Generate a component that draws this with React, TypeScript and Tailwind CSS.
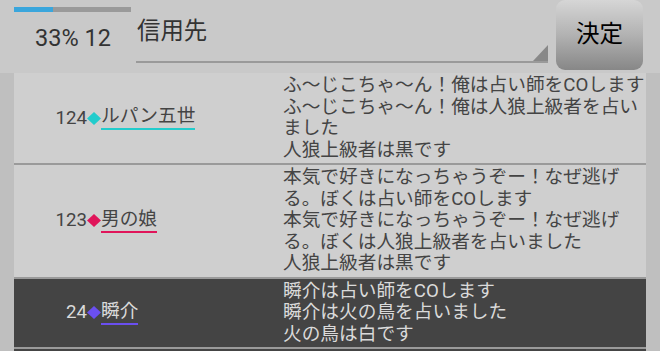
const FONT = 'font-["Roboto","Noto_Sans_CJK_JP",sans-serif]'

type Row = {
  no: number
  name: string
  color: string
  lines: string[]
  dark?: boolean
}

const ROWS: Row[] = [
  {
    no: 124,
    name: 'ルパン五世',
    color: '#22cccc',
    lines: ['ふ〜じこちゃ〜ん！俺は占い師をCOします', 'ふ〜じこちゃ〜ん！俺は人狼上級者を占いました', '人狼上級者は黒です'],
  },
  {
    no: 123,
    name: '男の娘',
    color: '#e0155a',
    lines: [
      '本気で好きになっちゃうぞー！なぜ逃げる。ぼくは占い師をCOします',
      '本気で好きになっちゃうぞー！なぜ逃げる。ぼくは人狼上級者を占いました',
      '人狼上級者は黒です',
    ],
  },
  {
    no: 24,
    name: '瞬介',
    color: '#6a4ff0',
    lines: ['瞬介は占い師をCOします', '瞬介は火の鳥を占いました', '火の鳥は白です'],
    dark: true,
  },
]

function Diamond({ color }: { color: string }) {
  return (
    <svg width="14" height="13" viewBox="0 0 14 13" className="shrink-0">
      <polygon points="7,0 14,6.5 7,13 0,6.5" fill={color} />
    </svg>
  )
}

export default function App() {
  return (
    <div className={`${FONT} w-[660px] h-[351px] overflow-hidden bg-[#c9c9c9]`}>
      {/* header */}
      <div className="flex h-[73px]">
        <div className="w-[136px] flex flex-col">
          <div className="ml-[14px] mt-[7px] w-[117px] h-[5px] bg-[#9a9a9a]">
            <div className="h-full w-[39px] bg-[#3aa6dc]" />
          </div>
          <div className="ml-[35px] mt-[12px] text-[23.5px] leading-[28px] text-[#333]">33% 12</div>
        </div>
        <div className="relative w-[412px] h-[63px] border-b-2 border-[#9a9a9a]">
          <div className="pl-[1px] mt-[17px] text-[23.4px] leading-[28px] text-[#333]">信用先</div>
          <svg width="15" height="16" viewBox="0 0 15 16" className="absolute right-0 bottom-0">
            <polygon points="15,0 15,16 0,16" fill="#888" />
          </svg>
        </div>
        <div className="ml-[8px] w-[87px] h-[70px] rounded-[9px] bg-gradient-to-b from-[#d6d6d6] via-[#b2b2b2] to-[#878787] flex items-center justify-center text-[23.5px] text-black">
          決定
        </div>
      </div>

      {/* list */}
      <div className="bg-[#bfbfbf] px-[14px]">
        {ROWS.map((r) => (
          <div
            key={r.no}
            className={`flex border-b-2 border-[#9a9a9a] ${r.dark ? 'bg-[#444444] text-[#dadada]' : 'bg-[#cfcfcf] text-[#444]'}`}
          >
            <div className="w-[268px] flex items-center text-[18.7px] leading-[21px]">
              <span className="w-[73px] text-right">{r.no}</span>
              <Diamond color={r.color} />
              <span className="border-b-2 pb-[1px]" style={{ borderColor: r.color }}>
                {r.name}
              </span>
            </div>
            <div className="w-[364px] pl-[1px] py-[2px] text-[18.7px] leading-[21.5px]">
              {r.lines.map((l, i) => (
                <div key={i}>{l}</div>
              ))}
            </div>
          </div>
        ))}
        <div className="h-[20px] bg-[#444444]" />
      </div>
    </div>
  )
}
